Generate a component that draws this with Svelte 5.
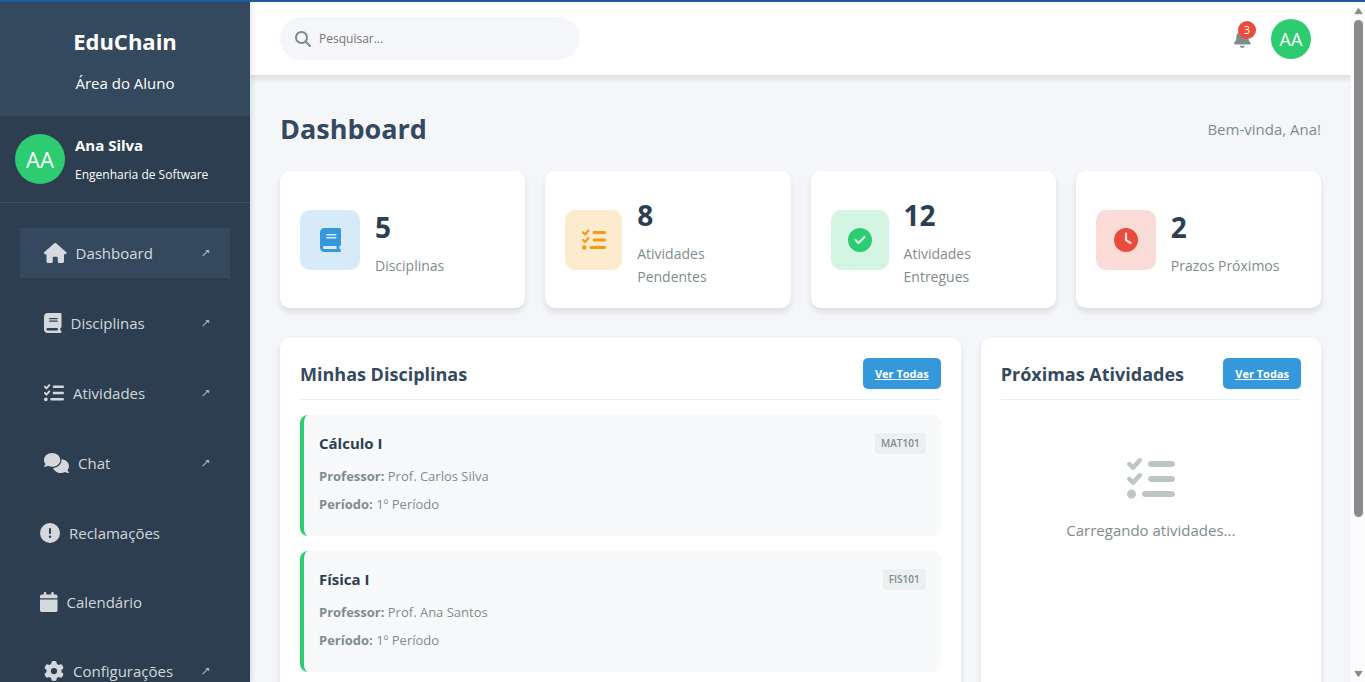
<script>
  const icons = {
    house: [576, 'M575.8 255.5c0 18-15 32.1-32 32.1h-32l.7 160.2c0 2.7-.2 5.4-.5 8.1V472c0 22.1-17.9 40-40 40H456c-1.1 0-2.2 0-3.3-.1c-1.4 .1-2.8 .1-4.2 .1H416 392c-22.1 0-40-17.9-40-40V448 384c0-17.7-14.3-32-32-32H256c-17.7 0-32 14.3-32 32v64 24c0 22.1-17.9 40-40 40H160 128.1c-1.5 0-3-.1-4.5-.2c-1.2 .1-2.4 .2-3.6 .2H104c-22.1 0-40-17.9-40-40V360c0-.9 0-1.9 .1-2.8V287.6H32c-18 0-32-14-32-32.1c0-9 3-17 10-24L266.4 8c7-7 15-8 22-8s15 2 21 7L564.8 231.5c8 7 12 15 11 24z'],
    book: [448, 'M96 0C43 0 0 43 0 96V416c0 53 43 96 96 96H384h32c17.7 0 32-14.3 32-32s-14.3-32-32-32V384c17.7 0 32-14.3 32-32V32c0-17.7-14.3-32-32-32H384 96zm0 384H352v64H96c-17.7 0-32-14.3-32-32s14.3-32 32-32zm32-240c0-8.8 7.2-16 16-16H336c8.8 0 16 7.2 16 16s-7.2 16-16 16H144c-8.8 0-16-7.2-16-16zm16 48H336c8.8 0 16 7.2 16 16s-7.2 16-16 16H144c-8.8 0-16-7.2-16-16s7.2-16 16-16z'],
    tasks: [512, 'M152.1 38.2c9.9 8.9 10.7 24 1.8 33.9l-72 80c-4.4 4.9-10.6 7.8-17.2 7.9s-12.9-2.4-17.6-7L7 113C-2.3 103.6-2.3 88.4 7 79s24.6-9.4 33.9 0l22.1 22.1 55.1-61.2c8.9-9.9 24-10.7 33.9-1.8zm0 160c9.9 8.9 10.7 24 1.8 33.9l-72 80c-4.4 4.9-10.6 7.8-17.2 7.9s-12.9-2.4-17.6-7L7 273c-9.4-9.4-9.4-24.6 0-33.9s24.6-9.4 33.9 0l22.1 22.1 55.1-61.2c8.9-9.9 24-10.7 33.9-1.8zM224 96c0-17.7 14.3-32 32-32H480c17.7 0 32 14.3 32 32s-14.3 32-32 32H256c-17.7 0-32-14.3-32-32zm0 160c0-17.7 14.3-32 32-32H480c17.7 0 32 14.3 32 32s-14.3 32-32 32H256c-17.7 0-32-14.3-32-32zM160 416c0-17.7 14.3-32 32-32H480c17.7 0 32 14.3 32 32s-14.3 32-32 32H192c-17.7 0-32-14.3-32-32zM48 368a48 48 0 1 1 0 96 48 48 0 1 1 0-96z'],
    comments: [640, 'M208 352c114.9 0 208-78.8 208-176S322.9 0 208 0S0 78.8 0 176c0 38.6 14.7 74.3 39.6 103.4c-3.5 9.4-8.7 17.7-14.2 24.7c-4.8 6.2-9.7 11-13.3 14.3c-1.8 1.6-3.3 2.9-4.3 3.7c-.5 .4-.9 .7-1.1 .8l-.2 .2 0 0 0 0C1 327.2-1.4 334.4 .8 340.9S9.1 352 16 352c21.8 0 43.8-5.6 62.1-12.5c9.2-3.5 17.8-7.4 25.3-11.4C134.1 343.3 169.8 352 208 352zM448 176c0 112.3-99.1 196.9-216.5 207C255.8 457.4 336.4 512 432 512c38.2 0 73.9-8.7 104.7-23.9c7.5 4 16 7.9 25.2 11.4c18.3 6.9 40.3 12.5 62.1 12.5c6.9 0 13.1-4.5 15.2-11.1c2.1-6.6-.2-13.8-5.8-17.9l0 0 0 0-.2-.2c-.2-.2-.6-.4-1.1-.8c-1-.8-2.5-2-4.3-3.7c-3.6-3.3-8.5-8.1-13.3-14.3c-5.5-7-10.7-15.4-14.2-24.7c24.9-29 39.6-64.7 39.6-103.4c0-92.8-84.9-168.9-192.6-175.5c.4 5.1 .6 10.3 .6 15.5z'],
    alert: [512, 'M256 512A256 256 0 1 0 256 0a256 256 0 1 0 0 512zm0-384c13.3 0 24 10.7 24 24V264c0 13.3-10.7 24-24 24s-24-10.7-24-24V152c0-13.3 10.7-24 24-24zM224 352a32 32 0 1 1 64 0 32 32 0 1 1 -64 0z'],
    calendar: [448, 'M96 32V64H48C21.5 64 0 85.5 0 112v48H448V112c0-26.5-21.5-48-48-48H352V32c0-17.7-14.3-32-32-32s-32 14.3-32 32V64H160V32c0-17.7-14.3-32-32-32S96 14.3 96 32zM448 192H0V464c0 26.5 21.5 48 48 48H400c26.5 0 48-21.5 48-48V192z'],
    gear: [512, 'M495.9 166.6c3.2 8.7 .5 18.4-6.4 24.6l-43.3 39.4c1.1 8.3 1.7 16.8 1.7 25.4s-.6 17.1-1.7 25.4l43.3 39.4c6.9 6.2 9.6 15.9 6.4 24.6c-4.4 11.9-9.7 23.3-15.8 34.3l-4.7 8.1c-6.6 11-14 21.4-22.1 31.2c-5.9 7.2-15.7 9.6-24.5 6.8l-55.7-17.7c-13.4 10.3-28.2 18.9-44 25.4l-12.5 57.1c-2 9.1-9 16.3-18.2 17.8c-13.8 2.3-28 3.5-42.5 3.5s-28.7-1.2-42.5-3.5c-9.2-1.5-16.2-8.7-18.2-17.8l-12.5-57.1c-15.8-6.5-30.6-15.1-44-25.4L83.1 425.9c-8.8 2.8-18.6 .3-24.5-6.8c-8.1-9.8-15.5-20.2-22.1-31.2l-4.7-8.1c-6.1-11-11.4-22.4-15.8-34.3c-3.2-8.7-.5-18.4 6.4-24.6l43.3-39.4C64.6 273.1 64 264.6 64 256s.6-17.1 1.7-25.4L22.4 191.2c-6.9-6.2-9.6-15.9-6.4-24.6c4.4-11.9 9.7-23.3 15.8-34.3l4.7-8.1c6.6-11 14-21.4 22.1-31.2c5.9-7.2 15.7-9.6 24.5-6.8l55.7 17.7c13.4-10.3 28.2-18.9 44-25.4l12.5-57.1c2-9.1 9-16.3 18.2-17.8C227.3 1.2 241.5 0 256 0s28.7 1.2 42.5 3.5c9.2 1.5 16.2 8.7 18.2 17.8l12.5 57.1c15.8 6.5 30.6 15.1 44 25.4l55.7-17.7c8.8-2.8 18.6-.3 24.5 6.8c8.1 9.8 15.5 20.2 22.1 31.2l4.7 8.1c6.1 11 11.4 22.4 15.8 34.3zM256 336a80 80 0 1 0 0-160 80 80 0 1 0 0 160z'],
    search: [512, 'M416 208c0 45.9-14.9 88.3-40 122.7L502.6 457.4c12.5 12.5 12.5 32.8 0 45.3s-32.8 12.5-45.3 0L330.7 376c-34.4 25.2-76.8 40-122.7 40C93.1 416 0 322.9 0 208S93.1 0 208 0S416 93.1 416 208zM208 352a144 144 0 1 0 0-288 144 144 0 1 0 0 288z'],
    bell: [448, 'M224 0c-17.7 0-32 14.3-32 32V51.2C119 66 64 130.6 64 208v18.8c0 47-17.3 92.4-48.5 127.6l-7.4 8.3c-8.4 9.4-10.4 22.9-5.3 34.4S19.4 416 32 416H416c12.6 0 24-7.4 29.2-18.9s3.1-25-5.3-34.4l-7.4-8.3C401.3 319.2 384 273.9 384 226.8V208c0-77.4-55-142-128-156.8V32c0-17.7-14.3-32-32-32zm45.3 493.3c12-12 18.7-28.3 18.7-45.3H224 160c0 17 6.7 33.3 18.7 45.3s28.3 18.7 45.3 18.7s33.3-6.7 45.3-18.7z'],
    check: [512, 'M256 512A256 256 0 1 0 256 0a256 256 0 1 0 0 512zM369 209L241 337c-9.4 9.4-24.6 9.4-33.9 0l-64-64c-9.4-9.4-9.4-24.6 0-33.9s24.6-9.4 33.9 0l47 47L335 175c9.4-9.4 24.6-9.4 33.9 0s9.4 24.6 0 33.9z'],
    clock: [512, 'M256 0a256 256 0 1 1 0 512A256 256 0 1 1 256 0zM232 120V256c0 8 4 15.5 10.7 20l96 64c11 7.4 25.9 4.4 33.3-6.7s4.4-25.9-6.7-33.3L280 243.2V120c0-13.3-10.7-24-24-24s-24 10.7-24 24z']
  };

  const nav = [
    { label: 'Dashboard', icon: 'house', opens: true, active: true },
    { label: 'Disciplinas', icon: 'book', opens: true },
    { label: 'Atividades', icon: 'tasks', opens: true },
    { label: 'Chat', icon: 'comments', opens: true },
    { label: 'Reclamações', icon: 'alert' },
    { label: 'Calendário', icon: 'calendar' },
    { label: 'Configurações', icon: 'gear', opens: true }
  ];

  const stats = [
    { value: 5, label: 'Disciplinas', icon: 'book', tone: 'blue' },
    { value: 8, label: 'Atividades Pendentes', icon: 'tasks', tone: 'orange' },
    { value: 12, label: 'Atividades Entregues', icon: 'check', tone: 'green' },
    { value: 2, label: 'Prazos Próximos', icon: 'clock', tone: 'red' }
  ];

  const courses = [
    { name: 'Cálculo I', code: 'MAT101', teacher: 'Prof. Carlos Silva', term: '1º Período' },
    { name: 'Física I', code: 'FIS101', teacher: 'Prof. Ana Santos', term: '1º Período' }
  ];
</script>

{#snippet icon(name)}
  <svg class="icon" viewBox="0 0 {icons[name][0]} 512" aria-hidden="true">
    <path fill="currentColor" d={icons[name][1]} />
  </svg>
{/snippet}

<div class="page">
  <div class="app">
    <aside class="sidebar">
      <div class="brand">
        <h2>EduChain</h2>
        <p>Área do Aluno</p>
      </div>
      <div class="profile">
        <div class="avatar large">AA</div>
        <div>
          <h3>Ana Silva</h3>
          <p>Engenharia de Software</p>
        </div>
      </div>
      <nav>
        {#each nav as item}
          <a href="#top" class:active={item.active} class:opens={item.opens}>
            {@render icon(item.icon)}
            <span>{item.label}</span>
            {#if item.opens}
              <svg class="arrow" viewBox="0 0 8 8" aria-hidden="true">
                <path d="M.6 7.2 5.8 2" fill="none" stroke="currentColor" stroke-width="1.1" />
                <path d="M3.2 1H7.2V4.6Z" fill="currentColor" />
              </svg>
            {/if}
          </a>
        {/each}
      </nav>
    </aside>

    <div class="main">
      <header class="topbar">
        <label class="search">
          {@render icon('search')}
          <input type="text" placeholder="Pesquisar..." aria-label="Pesquisar" />
        </label>
        <div class="tools">
          <button class="bell" aria-label="Notificações">
            {@render icon('bell')}
            <span class="badge">3</span>
          </button>
          <div class="avatar">AA</div>
        </div>
      </header>

      <main>
        <div class="heading">
          <h1>Dashboard</h1>
          <p>Bem-vinda, Ana!</p>
        </div>

        <section class="stats">
          {#each stats as stat}
            <div class="stat card">
              <div class="tile {stat.tone}">{@render icon(stat.icon)}</div>
              <div>
                <h3>{stat.value}</h3>
                <p>{stat.label}</p>
              </div>
            </div>
          {/each}
        </section>

        <div class="panels">
          <section class="card panel">
            <div class="panel-head">
              <h2>Minhas Disciplinas</h2>
              <a href="#top">Ver Todas</a>
            </div>
            <div class="courses">
              {#each courses as course}
                <article>
                  <div class="course-head">
                    <h3>{course.name}</h3>
                    <span class="code">{course.code}</span>
                  </div>
                  <p><strong>Professor:</strong> {course.teacher}</p>
                  <p><strong>Período:</strong> {course.term}</p>
                </article>
              {/each}
            </div>
          </section>

          <section class="card panel">
            <div class="panel-head">
              <h2>Próximas Atividades</h2>
              <a href="#top">Ver Todas</a>
            </div>
            <div class="empty">
              {@render icon('tasks')}
              <p>Carregando atividades...</p>
            </div>
          </section>
        </div>
      </main>
    </div>

    <div class="scrollbar" aria-hidden="true">
      <svg viewBox="0 0 10 8"><path d="M5 1 9 7H1Z" fill="#8b8b8b" stroke="#8b8b8b" stroke-linejoin="round" /></svg>
      <div class="track"><div class="thumb"></div></div>
      <svg viewBox="0 0 10 8"><path d="M5 7 9 1H1Z" fill="#8b8b8b" stroke="#8b8b8b" stroke-linejoin="round" /></svg>
    </div>
  </div>
</div>

<style>
  :global(body) {
    margin: 0;
    overflow: hidden;
  }

  .page {
    height: 100vh;
    box-sizing: border-box;
    border-top: 2px solid #1f5aa0;
    background: #f5f6fa;
    color: #2c3e50;
    font-family: 'Segoe UI', 'Open Sans', 'Noto Sans', sans-serif;
    font-size: 15px;
    line-height: 24px;
  }

  .page :where(h1, h2, h3, p) {
    margin: 0;
  }

  .app {
    display: flex;
    height: 100%;
    overflow: hidden;
  }

  .icon {
    display: block;
    flex: none;
    height: 20px;
  }

  .sidebar {
    z-index: 1;
    flex: none;
    width: 250px;
    overflow: hidden;
    background: #2c3e50;
    color: #fff;
    box-shadow: 2px 0 5px rgba(0, 0, 0, 0.1);
  }

  .brand {
    padding: 18px 20px 21px;
    background: #34495e;
    text-align: center;
  }

  .brand h2 {
    padding-bottom: 9px;
    font-size: 22px;
    line-height: 42px;
  }

  .profile {
    display: flex;
    align-items: center;
    gap: 10px;
    padding: 15px;
    border-bottom: 1px solid rgba(255, 255, 255, 0.1);
  }

  .profile h3 {
    padding-bottom: 4px;
    font-size: 15px;
    line-height: 28px;
  }

  .profile p {
    font-size: 12px;
  }

  .avatar {
    display: grid;
    place-items: center;
    flex: none;
    width: 40px;
    height: 40px;
    border-radius: 50%;
    background: #2ecc71;
    color: #fff;
    font-size: 18px;
  }

  .avatar.large {
    width: 50px;
    height: 50px;
    font-size: 22px;
  }

  nav {
    display: grid;
    gap: 20px;
    padding: 25px 20px;
  }

  nav a {
    display: flex;
    align-items: center;
    gap: 9px;
    height: 49px;
    padding: 0 20px;
    color: rgba(255, 255, 255, 0.8);
    text-decoration: none;
  }

  nav a.opens {
    height: 50px;
    padding-left: 24px;
  }

  nav a.active {
    background: #34495e;
  }

  .arrow {
    width: 8px;
    height: 8px;
    margin-left: auto;
    opacity: 0.7;
  }

  .main {
    flex: 1;
    min-width: 0;
  }

  .topbar {
    display: flex;
    align-items: center;
    justify-content: space-between;
    height: 73px;
    padding: 0 40px 0 30px;
    background: #fff;
    box-shadow: 0 4px 6px rgba(0, 0, 0, 0.1);
  }

  .search {
    display: flex;
    align-items: center;
    gap: 8px;
    width: 300px;
    height: 43px;
    box-sizing: border-box;
    padding: 0 15px;
    border-radius: 22px;
    background: #f5f6fa;
    color: #7f8c8d;
  }

  .search .icon {
    height: 16px;
  }

  .search input {
    flex: 1;
    min-width: 0;
    padding: 0;
    border: 0;
    outline: 0;
    background: none;
    font: inherit;
    font-size: 12px;
  }

  .search input::placeholder {
    color: #757575;
  }

  .tools {
    display: flex;
    align-items: center;
    gap: 20px;
  }

  .bell {
    position: relative;
    padding: 0;
    border: 0;
    background: none;
    color: #7f8c8d;
  }

  .bell .icon {
    height: 19px;
  }

  .badge {
    position: absolute;
    top: -8px;
    right: -5px;
    width: 18px;
    height: 18px;
    border-radius: 50%;
    background: #e74c3c;
    color: #fff;
    font: 11px/18px 'Segoe UI', 'Open Sans', sans-serif;
    text-align: center;
  }

  main {
    padding: 30px;
  }

  .heading {
    display: flex;
    align-items: center;
    justify-content: space-between;
    padding-bottom: 18px;
    color: #7f8c8d;
  }

  h1 {
    color: #34495e;
    font-size: 27px;
    line-height: 48px;
  }

  .card {
    border-radius: 10px;
    background: #fff;
    box-shadow: 0 4px 6px rgba(0, 0, 0, 0.1);
  }

  .stats {
    display: grid;
    grid-template-columns: repeat(4, minmax(0, 1fr));
    gap: 20px;
    padding-bottom: 30px;
  }

  .stat {
    display: flex;
    align-items: center;
    gap: 15px;
    padding: 20px;
  }

  .stat h3 {
    padding-bottom: 3px;
    font-size: 28px;
    line-height: 48px;
  }

  .stat p {
    color: #7f8c8d;
    font-size: 14px;
    line-height: 23px;
  }

  .tile {
    display: grid;
    place-items: center;
    width: 60px;
    height: 60px;
    border-radius: 10px;
  }

  .tile .icon {
    height: 24px;
  }

  .blue {
    background: rgba(52, 152, 219, 0.2);
    color: #3498db;
  }

  .orange {
    background: rgba(243, 156, 18, 0.2);
    color: #f39c12;
  }

  .green {
    background: rgba(46, 204, 113, 0.2);
    color: #2ecc71;
  }

  .red {
    background: rgba(231, 76, 60, 0.2);
    color: #e74c3c;
  }

  .panels {
    display: grid;
    grid-template-columns: 2fr 1fr;
    gap: 20px;
  }

  .panel {
    min-height: 400px;
    padding: 20px;
  }

  .panel-head {
    display: flex;
    align-items: center;
    justify-content: space-between;
    padding-bottom: 10px;
    border-bottom: 1px solid #ecf0f1;
  }

  .panel-head h2 {
    color: #34495e;
    font-size: 18px;
  }

  .panel-head a {
    padding: 5px 12px;
    border-radius: 5px;
    background: #3498db;
    color: #fff;
    font-size: 11px;
    font-weight: 700;
    line-height: 21px;
  }

  .courses {
    display: grid;
    gap: 15px;
    padding-top: 15px;
  }

  article {
    padding: 15px 15px 18px;
    border-left: 4px solid #2ecc71;
    border-radius: 8px;
    background: #f8f9fa;
  }

  .course-head {
    display: flex;
    align-items: center;
    justify-content: space-between;
    padding-bottom: 5px;
  }

  .course-head h3 {
    font-size: 15px;
    line-height: 27px;
  }

  .code {
    padding: 0 6px;
    border-radius: 3px;
    background: #ecf0f1;
    color: #7f8c8d;
    font-size: 10px;
    font-weight: 600;
    line-height: 21px;
  }

  article p {
    color: #7f8c8d;
    font-size: 13px;
    line-height: 28px;
  }

  .empty {
    display: grid;
    justify-items: center;
    gap: 15px;
    padding-top: 55px;
    color: #7f8c8d;
  }

  .empty .icon {
    height: 48px;
    opacity: 0.5;
  }

  .scrollbar {
    display: flex;
    flex: none;
    flex-direction: column;
    align-items: center;
    justify-content: space-between;
    gap: 5px;
    width: 14px;
    box-sizing: border-box;
    padding: 5px 2px 4px 3px;
    background: #fcfcfc;
  }

  .scrollbar svg {
    display: block;
    flex: none;
    width: 9px;
    height: 8px;
  }

  .track {
    flex: 1;
    width: 9px;
  }

  .thumb {
    height: 77%;
    border-radius: 5px;
    background: #8b8b8b;
  }
</style>
